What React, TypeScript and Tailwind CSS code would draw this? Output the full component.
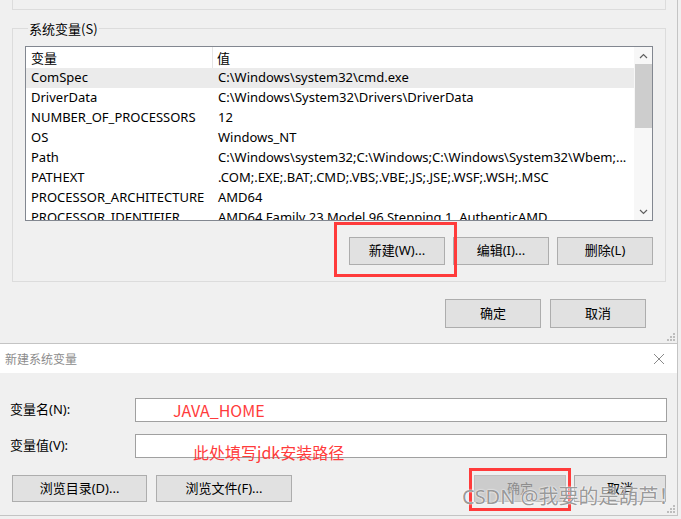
import React from "react";

const rows: [string, string][] = [
  ["ComSpec", "C:\\Windows\\system32\\cmd.exe"],
  ["DriverData", "C:\\Windows\\System32\\Drivers\\DriverData"],
  ["NUMBER_OF_PROCESSORS", "12"],
  ["OS", "Windows_NT"],
  ["Path", "C:\\Windows\\system32;C:\\Windows;C:\\Windows\\System32\\Wbem;..."],
  ["PATHEXT", ".COM;.EXE;.BAT;.CMD;.VBS;.VBE;.JS;.JSE;.WSF;.WSH;.MSC"],
  ["PROCESSOR_ARCHITECTURE", "AMD64"],
  ["PROCESSOR_IDENTIFIER", "AMD64 Family 23 Model 96 Stepping 1, AuthenticAMD"],
];

function WinButton({
  children,
  className = "",
  disabled = false,
}: {
  children: React.ReactNode;
  className?: string;
  disabled?: boolean;
}) {
  return (
    <div
      className={
        "flex items-center justify-center border " +
        (disabled
          ? "bg-[#cccccc] border-[#bfbfbf] text-[#8d8d8d] "
          : "bg-[#e1e1e1] border-[#adadad] text-black ") +
        className
      }
    >
      {children}
    </div>
  );
}

function Grip() {
  return (
    <svg width="8" height="8" viewBox="0 0 8 8" className="absolute right-[2px] bottom-[2px]">
      {[
        [6, 0],
        [6, 3],
        [3, 3],
        [6, 6],
        [3, 6],
        [0, 6],
      ].map(([x, y], i) => (
        <rect key={i} x={x} y={y} width="2" height="2" fill="#bdbdbd" />
      ))}
    </svg>
  );
}

function Chevron({ up }: { up?: boolean }) {
  return (
    <svg width="9" height="6" viewBox="0 0 9 6">
      <path
        d={up ? "M1 5 L4.5 1.5 L8 5" : "M1 1 L4.5 4.5 L8 1"}
        fill="none"
        stroke="#606060"
        strokeWidth="1.2"
      />
    </svg>
  );
}

export default function App() {
  return (
    <div className="relative w-[681px] h-[519px] overflow-hidden bg-[#f0f0f0] font-['Noto_Sans','Noto_Sans_CJK_SC',sans-serif] text-[13px] text-black flex flex-col">
      {/* upper window: environment variables */}
      <div className="relative h-[344px] w-[678px] border-r border-b border-[#c4c4c4] flex flex-col shrink-0">
        <div className="ml-[12px] w-[654px] h-[10px] border-x border-b border-[#dcdcdc]" />

        <fieldset className="ml-[12px] mt-[10px] w-[654px] border border-[#dcdcdc] px-[12px] pb-[16px]">
          <legend className="ml-[3px] px-[1px] leading-[17px] font-['Noto_Sans_CJK_SC',sans-serif] text-[13px]">
            系统变量(S)
          </legend>

          <div className="mt-[9px] h-[175px] border border-[#828790] bg-white flex overflow-hidden">
            <div className="flex-1 overflow-hidden">
              <div className="flex h-[21px] items-center">
                <div className="w-[187px] h-full border-r border-[#e5e5e5] pl-[5px] flex items-center font-['Noto_Sans_CJK_SC',sans-serif]">
                  变量
                </div>
                <div className="pl-[4px] font-['Noto_Sans_CJK_SC',sans-serif]">值</div>
              </div>
              {rows.map(([name, value], i) => (
                <div
                  key={name}
                  className={
                    "flex h-[20px] items-center whitespace-nowrap " +
                    (i === 0 ? "bg-[#ebebeb]" : "")
                  }
                >
                  <div className="w-[187px] pl-[5px] shrink-0">{name}</div>
                  <div className="pl-[5px]">{value}</div>
                </div>
              ))}
            </div>
            <div className="w-[18px] bg-[#f7f7f7] flex flex-col items-center">
              <div className="h-[17px] flex items-center justify-center">
                <Chevron up />
              </div>
              <div className="w-[17px] h-[64px] bg-[#cdcdcd]" />
              <div className="flex-1" />
              <div className="h-[17px] flex items-center justify-center">
                <Chevron />
              </div>
            </div>
          </div>

          <div className="mt-[16px] flex justify-end gap-[8px]">
            <div className="relative">
              <WinButton className="w-[96px] h-[28px]">新建(W)...</WinButton>
              <div className="absolute -left-[15px] -right-[12px] -top-[15px] -bottom-[12px] border-[3px] border-[#ff3b3b]" />
            </div>
            <WinButton className="w-[96px] h-[28px]">编辑(I)...</WinButton>
            <WinButton className="w-[96px] h-[28px]">删除(L)</WinButton>
          </div>
        </fieldset>

        <div className="mt-[17px] flex justify-end gap-[9px] pr-[31px]">
          <WinButton className="w-[96px] h-[29px]">确定</WinButton>
          <WinButton className="w-[96px] h-[29px]">取消</WinButton>
        </div>
        <Grip />
      </div>

      {/* lower dialog: new system variable */}
      <div className="relative w-[678px] h-[172px] border-r border-b border-[#c4c4c4] flex flex-col shrink-0">
        <div className="h-[29px] bg-white flex items-center justify-between pl-[5px] pr-[12px]">
          <span className="text-[12px] text-[#8c8c8c] font-['Noto_Sans_CJK_SC',sans-serif]">新建系统变量</span>
          <svg width="12" height="12" viewBox="0 0 12 12">
            <path d="M1 1 L11 11 M11 1 L1 11" stroke="#8a8a8a" strokeWidth="1" />
          </svg>
        </div>

        <div className="mt-[25px] flex items-center">
          <span className="w-[135px] pl-[10px]">变量名(N):</span>
          <div className="w-[532px] h-[24px] border border-[#a0a0a0] bg-white flex items-center pl-[37px]">
            <span className="text-[16px] text-[#ff3b3b] font-['Noto_Sans_CJK_SC',sans-serif]">JAVA_HOME</span>
          </div>
        </div>

        <div className="mt-[12px] flex items-center">
          <span className="w-[135px] pl-[10px]">变量值(V):</span>
          <div className="w-[532px] h-[24px] border border-[#a0a0a0] bg-white pl-[57px]">
            <span className="block text-[16px] leading-[16px] pt-[9px] text-[#ff3b3b] font-['Noto_Sans_CJK_SC',sans-serif]">
              此处填写jdk安装路径
            </span>
          </div>
        </div>

        <div className="mt-[17px] flex items-center pl-[12px] pr-[11px]">
          <WinButton className="w-[135px] h-[27px]">浏览目录(D)...</WinButton>
          <WinButton className="ml-[9px] w-[136px] h-[27px]">浏览文件(F)...</WinButton>
          <div className="flex-1" />
          <div className="relative">
            <WinButton disabled className="w-[92px] h-[27px]">确定</WinButton>
            <div className="absolute -left-[5px] -right-[5px] -top-[7px] -bottom-[9px] border-[3px] border-[#ff3b3b]" />
          </div>
          <WinButton className="ml-[8px] w-[92px] h-[27px]">取消</WinButton>
        </div>
        <Grip />
      </div>

      {/* watermark */}
      <div className="absolute left-[462px] top-[484px] text-[20px] leading-[26px] whitespace-nowrap text-[#8c8c8c]/90 font-['Noto_Sans','Noto_Sans_CJK_SC',sans-serif] [text-shadow:0_0_2px_#fff,0_0_1px_#fff]">
        CSDN @我要的是葫芦！
      </div>
    </div>
  );
}
